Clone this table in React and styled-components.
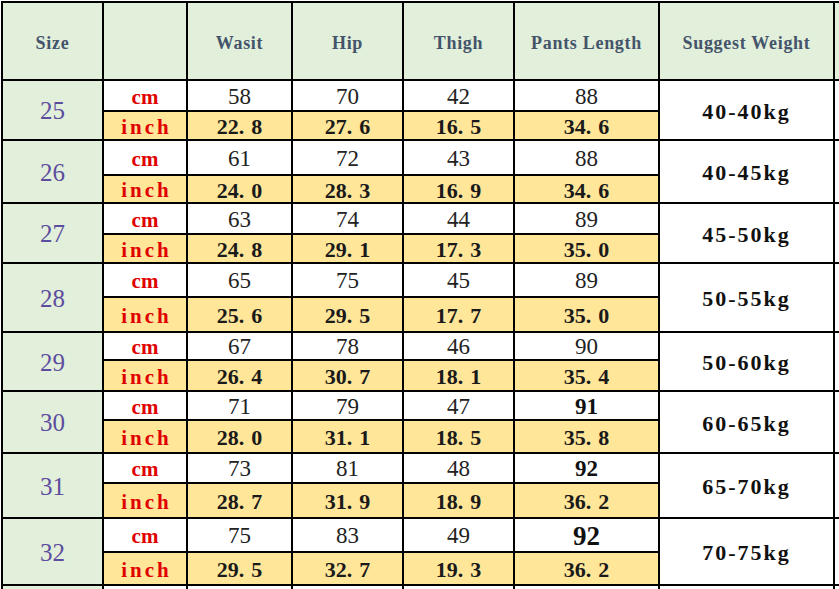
import React from 'react';
import styled, { createGlobalStyle } from 'styled-components';

const GlobalStyle = createGlobalStyle`
  html, body {
    margin: 0;
    padding: 0;
    background: #fff;
    overflow: hidden;
  }
`;

const headers = ['Size', '', 'Wasit', 'Hip', 'Thigh', 'Pants Length', 'Suggest Weight'];

const sizes = [
  { size: 25, cm: ['58', '70', '42', '88'], inch: ['22.8', '27.6', '16.5', '34.6'], weight: '40-40kg', h: [29, 27] },
  { size: 26, cm: ['61', '72', '43', '88'], inch: ['24.0', '28.3', '16.9', '34.6'], weight: '40-45kg', h: [33, 26] },
  { size: 27, cm: ['63', '74', '44', '89'], inch: ['24.8', '29.1', '17.3', '35.0'], weight: '45-50kg', h: [29, 27] },
  { size: 28, cm: ['65', '75', '45', '89'], inch: ['25.6', '29.5', '17.7', '35.0'], weight: '50-55kg', h: [32, 33] },
  { size: 29, cm: ['67', '78', '46', '90'], inch: ['26.4', '30.7', '18.1', '35.4'], weight: '50-60kg', h: [26, 29] },
  { size: 30, cm: ['71', '79', '47', '91'], inch: ['28.0', '31.1', '18.5', '35.8'], weight: '60-65kg', h: [27, 31], strong: 1 },
  { size: 31, cm: ['73', '81', '48', '92'], inch: ['28.7', '31.9', '18.9', '36.2'], weight: '65-70kg', h: [28, 33], strong: 1 },
  { size: 32, cm: ['75', '83', '49', '92'], inch: ['29.5', '32.7', '19.3', '36.2'], weight: '70-75kg', h: [32, 31], strong: 2 },
];

// grid rows: header, then a cm row and an inch row per size, then the cut-off row
const rowTemplate = ['76px', ...sizes.flatMap((s) => s.h.map((v) => v + 'px')), '30px'].join(' ');

function Decimal({ value }) {
  const [whole, frac] = value.split('.');
  return (
    <>
      {whole}
      <Dot>.</Dot>
      {frac}
    </>
  );
}

export default function App() {
  return (
    <Page>
      <GlobalStyle />
      <Chart $rows={rowTemplate}>
        {headers.map((h, i) => (
          <HeadCell key={i}>{h}</HeadCell>
        ))}
        <HeadCell />

        {sizes.map((s) => (
          <React.Fragment key={s.size}>
            <SizeCell>{s.size}</SizeCell>
            <UnitCell>cm</UnitCell>
            {s.cm.map((v, i) => (
              <ValueCell key={i} $strong={i === 3 ? s.strong : 0}>
                {v}
              </ValueCell>
            ))}
            <WeightCell>{s.weight}</WeightCell>
            <EdgeCell />
            <UnitCell $inch>inch</UnitCell>
            {s.inch.map((v, i) => (
              <InchCell key={i}>
                <Decimal value={v} />
              </InchCell>
            ))}
          </React.Fragment>
        ))}

        {Array.from({ length: 8 }).map((_, i) => (
          <Cell key={i} $bg={i === 0 ? '#e2efda' : '#fff'} />
        ))}
      </Chart>
    </Page>
  );
}

const Page = styled.div`
  padding: 1px 0 0 1px;
  width: 900px;
`;

const Chart = styled.div`
  display: grid;
  grid-template-columns: 99px 82px 103px 109px 109px 143px 173px 40px;
  grid-template-rows: ${({ $rows }) => $rows};
  gap: 2px;
  padding: 2px;
  background: #000;
  width: max-content;
`;

const Cell = styled.div`
  display: flex;
  align-items: center;
  justify-content: center;
  background: ${({ $bg }) => $bg || '#fff'};
  font-family: "Liberation Serif", "Times New Roman", serif;
  color: #1a1a1a;
  white-space: nowrap;
  overflow: hidden;
`;

const HeadCell = styled(Cell)`
  background: #e2efda;
  color: #44546a;
  font-size: 18px;
  font-weight: bold;
  letter-spacing: 0.7px;
  padding-top: 5px;
`;

const SizeCell = styled(Cell)`
  grid-row: span 2;
  background: #e2efda;
  color: #5c4d9e;
  font-size: 25px;
  padding-top: 2px;
`;

const UnitCell = styled(Cell)`
  background: ${({ $inch }) => ($inch ? '#ffe699' : '#fff')};
  color: #e00000;
  font-size: 21px;
  font-weight: bold;
  letter-spacing: ${({ $inch }) => ($inch ? '3px' : '0')};
  text-indent: ${({ $inch }) => ($inch ? '3px' : '0')};
  padding-top: 3px;
`;

const ValueCell = styled(Cell)`
  font-size: ${({ $strong }) => ($strong === 2 ? '27px' : '23px')};
  font-weight: ${({ $strong }) => ($strong ? 'bold' : 'normal')};
  color: ${({ $strong }) => ($strong ? '#111' : '#222')};
  padding-top: 2px;
`;

const InchCell = styled(Cell)`
  background: #ffe699;
  font-size: 22px;
  font-weight: bold;
  color: #1a1a1a;
  padding-top: 3px;
`;

const Dot = styled.span`
  padding-right: 7px;
`;

const WeightCell = styled(Cell)`
  grid-row: span 2;
  font-size: 22px;
  font-weight: bold;
  letter-spacing: 2px;
  color: #111;
  padding-top: 3px;
`;

const EdgeCell = styled(Cell)`
  grid-row: span 2;
`;
